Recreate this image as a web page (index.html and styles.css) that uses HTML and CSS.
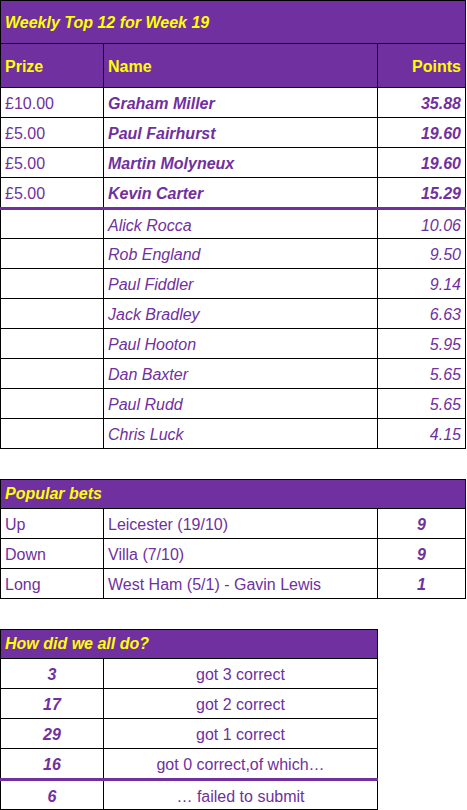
FILE: index.html
```html
<!DOCTYPE html>
<html>
<head>
<meta charset="utf-8">
<link rel="stylesheet" href="styles.css">
</head>
<body>
<div class="page">
<table class="t t-full">
  <colgroup><col class="c1"><col class="c2"><col class="c3"></colgroup>
  <tr class="title"><td colspan="3">Weekly Top 12 for Week 19</td></tr>
  <tr class="head"><td>Prize</td><td>Name</td><td class="right">Points</td></tr>
  <tr class="row"><td>£10.00</td><td class="bi">Graham Miller</td><td class="bi right">35.88</td></tr>
  <tr class="row"><td>£5.00</td><td class="bi">Paul Fairhurst</td><td class="bi right">19.60</td></tr>
  <tr class="row"><td>£5.00</td><td class="bi">Martin Molyneux</td><td class="bi right">19.60</td></tr>
  <tr class="row"><td>£5.00</td><td class="bi">Kevin Carter</td><td class="bi right">15.29</td></tr>
  <tr class="row sep"><td></td><td class="it">Alick Rocca</td><td class="it right">10.06</td></tr>
  <tr class="row"><td></td><td class="it">Rob England</td><td class="it right">9.50</td></tr>
  <tr class="row"><td></td><td class="it">Paul Fiddler</td><td class="it right">9.14</td></tr>
  <tr class="row"><td></td><td class="it">Jack Bradley</td><td class="it right">6.63</td></tr>
  <tr class="row"><td></td><td class="it">Paul Hooton</td><td class="it right">5.95</td></tr>
  <tr class="row"><td></td><td class="it">Dan Baxter</td><td class="it right">5.65</td></tr>
  <tr class="row"><td></td><td class="it">Paul Rudd</td><td class="it right">5.65</td></tr>
  <tr class="row"><td></td><td class="it">Chris Luck</td><td class="it right">4.15</td></tr>
</table>

<table class="t t-full">
  <colgroup><col class="c1"><col class="c2"><col class="c3"></colgroup>
  <tr class="title small"><td colspan="3">Popular bets</td></tr>
  <tr class="row"><td>Up</td><td>Leicester (19/10)</td><td class="bi center">9</td></tr>
  <tr class="row"><td>Down</td><td>Villa (7/10)</td><td class="bi center">9</td></tr>
  <tr class="row"><td>Long</td><td>West Ham (5/1) - Gavin Lewis</td><td class="bi center">1</td></tr>
</table>

<table class="t t-short">
  <colgroup><col class="c1"><col class="c2"></colgroup>
  <tr class="title small"><td colspan="2">How did we all do?</td></tr>
  <tr class="row"><td class="bi center">3</td><td class="center">got 3 correct</td></tr>
  <tr class="row"><td class="bi center">17</td><td class="center">got 2 correct</td></tr>
  <tr class="row"><td class="bi center">29</td><td class="center">got 1 correct</td></tr>
  <tr class="row"><td class="bi center">16</td><td class="center">got 0 correct,of which…</td></tr>
  <tr class="row sep"><td class="bi center">6</td><td class="center">… failed to submit</td></tr>
</table>
</div>
</body>
</html>
```

FILE: styles.css
```css
html, body {
  margin: 0;
  padding: 0;
  background: #ffffff;
}
.page {
  display: flex;
  flex-direction: column;
  gap: 30px;
  font-family: "Liberation Sans", Arial, sans-serif;
  font-size: 16px;
  color: #7030a0;
}
.t {
  border-collapse: collapse;
  table-layout: fixed;
}
.t-full { width: 465px; }
.t-short { width: 378px; }
.c1 { width: 103px; }
.c2 { width: 274px; }
.c3 { width: 88px; }
.t td {
  border: 1px solid #000;
  padding: 0 4px;
  vertical-align: middle;
  white-space: nowrap;
  line-height: 18px;
}
.title td {
  background: #7030a0;
  color: #ffff00;
  font-weight: bold;
  font-style: italic;
  height: 41px;
  padding-top: 1px;
}
.title.small td {
  height: 28px;
  padding-top: 0;
}
.head td {
  background: #7030a0;
  color: #ffff00;
  font-weight: bold;
  height: 41px;
  padding-top: 2px;
}
.row td {
  height: 26px;
  padding-top: 3px;
}
.sep td {
  border-top: 3px solid #7030a0;
  height: 25px;
}
.bi { font-weight: bold; font-style: italic; }
.it { font-style: italic; }
.right { text-align: right; }
.center { text-align: center; }
```
